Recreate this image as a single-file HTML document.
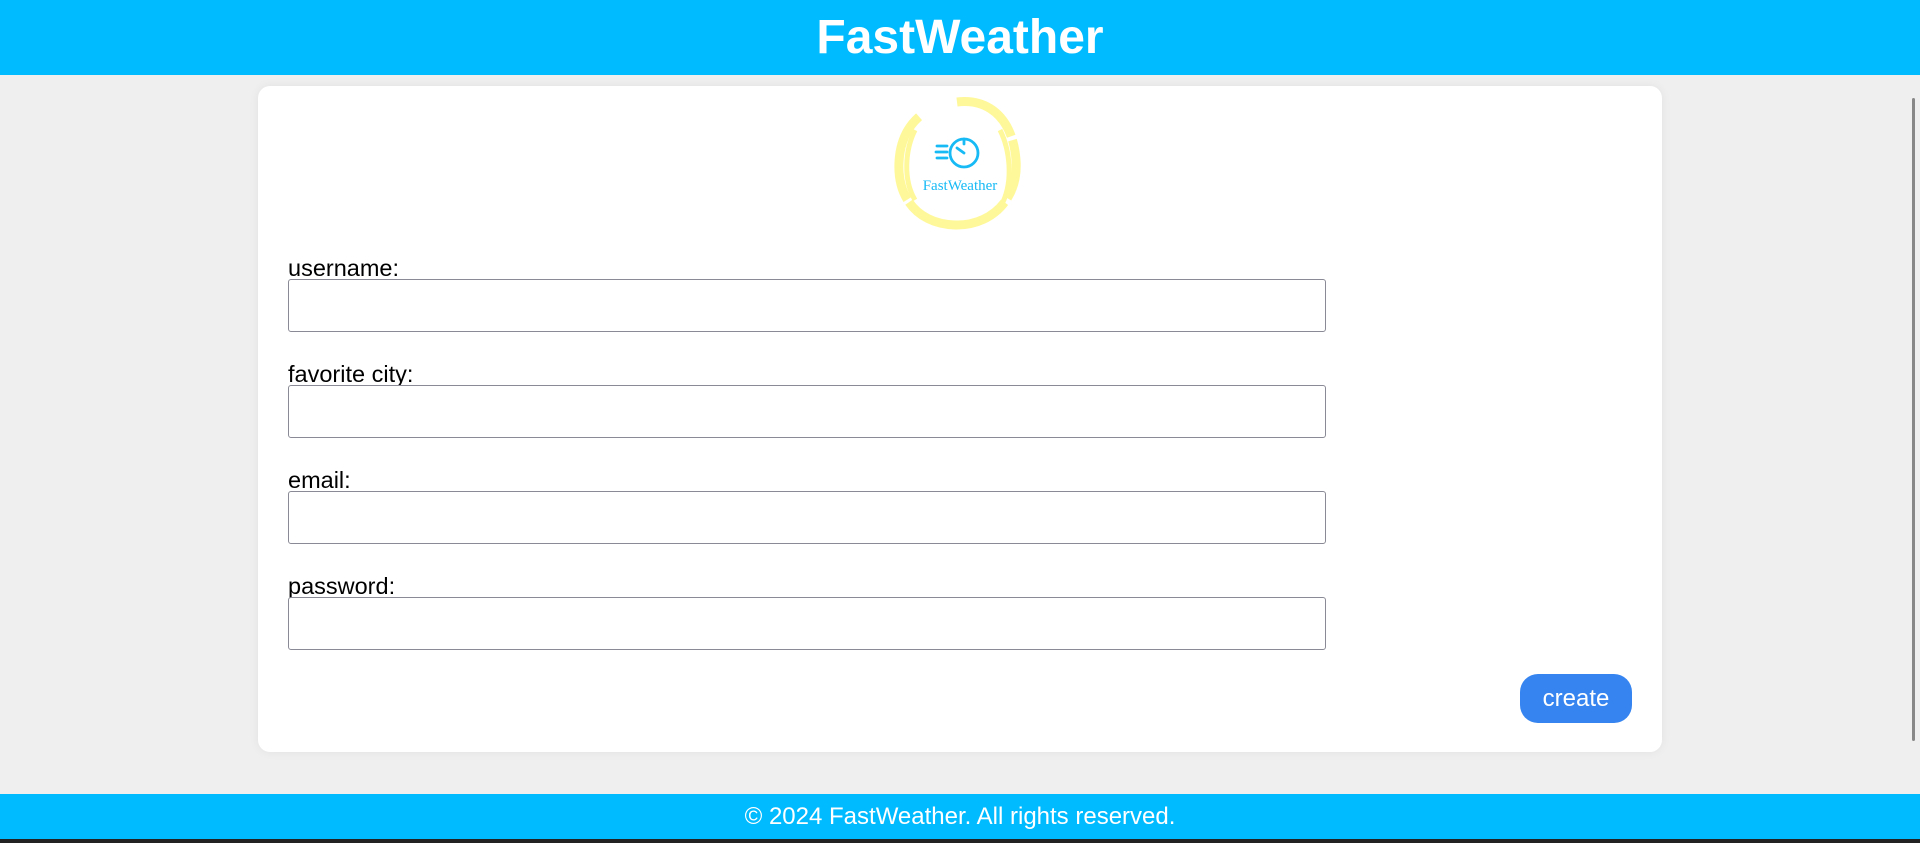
<!DOCTYPE html>
<html><head><meta charset="utf-8"><style>
*{box-sizing:border-box;margin:0;padding:0}
body{width:1920px;height:843px;background:#efefef;font-family:"Liberation Sans",Arial,sans-serif;position:relative;overflow:hidden}
.hdr{position:absolute;left:0;top:0;width:1920px;height:75px;background:#00bbff;color:#fff;font-weight:bold;font-size:48px;text-align:center;line-height:75px}
.card{position:absolute;left:258px;top:86px;width:1404px;height:666px;background:#fff;border-radius:12px;box-shadow:0 0 10px rgba(0,0,0,.06)}
.lbl{position:absolute;left:288px;font-size:23.5px;color:#000}
.inp{position:absolute;left:288px;width:1038px;height:53px;border:1.5px solid #8a8a96;border-radius:3px;background:#fff}
.btn{position:absolute;left:1520px;top:674px;width:112px;height:49px;background:#3584f0;border-radius:18px;color:#fff;font-size:24px;text-align:center;line-height:50px}
.ftr{position:absolute;left:0;top:794px;width:1920px;height:45px;background:#00bbff;color:#fff;font-size:24px;text-align:center;line-height:45px}
.bar{position:absolute;left:0;top:839px;width:1920px;height:4px;background:#222}
.sb{position:absolute;left:1912px;top:98px;width:3px;height:643px;background:#888;border-radius:2px}
</style></head><body>
<div class="hdr">FastWeather</div>
<div class="card"></div>
<svg style="position:absolute;left:885px;top:90px" width="145" height="148" viewBox="0 0 145 148">
<path d="M72 12 C105 8 128 30 131 70 C134 110 105 136 70 135 C35 134 12 110 14 72 C16 35 40 14 72 12 Z" fill="none" stroke="#fff89a" stroke-width="9" stroke-dasharray="70 4 60 5 110 3 90"/>
<path d="M30 40 C20 60 18 90 30 110" fill="none" stroke="#fff89a" stroke-width="5"/>
<path d="M115 40 C125 60 128 90 118 112" fill="none" stroke="#fff89a" stroke-width="5"/>
<g stroke="#17baf5" stroke-width="2.8" fill="none" stroke-linecap="round">
<line x1="52" y1="56" x2="62" y2="56"/><line x1="51" y1="62" x2="62" y2="62"/><line x1="52" y1="68" x2="62" y2="68"/>
<circle cx="79" cy="63" r="14"/><line x1="79" y1="63" x2="72" y2="58"/><line x1="79" y1="49" x2="79" y2="54"/>
</g>
<text x="75" y="100" text-anchor="middle" font-family="Liberation Serif,serif" font-size="15" fill="#17baf5">FastWeather</text>
</svg>
<div class="lbl" style="top:255px">username:</div><div class="inp" style="top:279px"></div>
<div class="lbl" style="top:361px">favorite city:</div><div class="inp" style="top:385px"></div>
<div class="lbl" style="top:467px">email:</div><div class="inp" style="top:491px"></div>
<div class="lbl" style="top:573px">password:</div><div class="inp" style="top:597px"></div>
<div class="btn">create</div>
<div class="sb"></div>
<div class="ftr">© 2024 FastWeather. All rights reserved.</div>
<div class="bar"></div>
</body></html>
